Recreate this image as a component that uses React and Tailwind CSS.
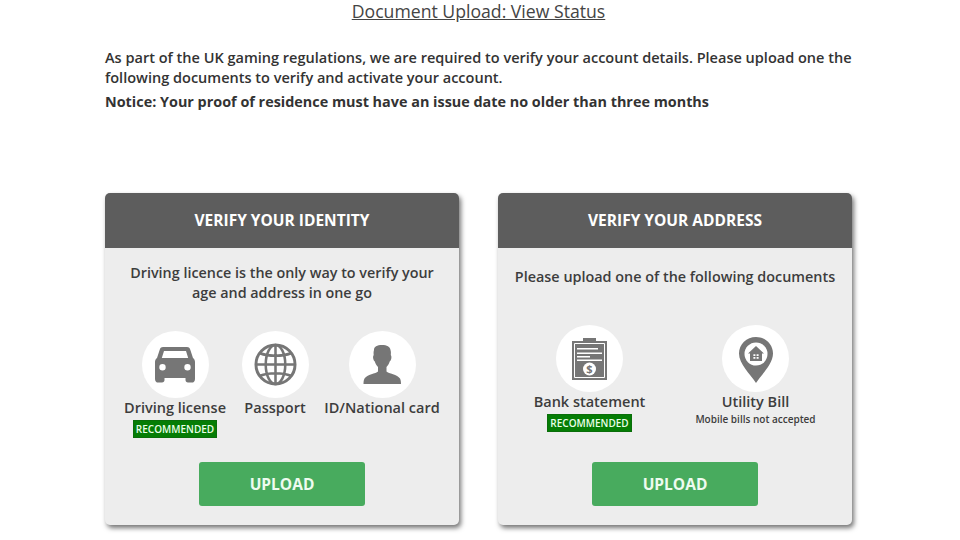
const Recommended = () => (
  <div className="mt-[2px] bg-[#057d05] border border-[#0a6e0a] text-[#e8ffe8] text-[10px] leading-[16px] font-semibold px-[2px] h-[18px] whitespace-nowrap">RECOMMENDED</div>
)

const CarIcon = () => (
  <svg width="40" height="36" viewBox="0 0 40 36" fill="#767676">
    <path fillRule="evenodd" d="M8 0h24c1.500 0 2.600 .8 3.200 2.400L38 11c1.300 1 2 2.500 2 4v17c0 2-1 3-2 3.500h-5c-1.500 0-2.500-1-2.500-2.500v-2h-21v2c0 1.500-1 2.500-2.500 2.500H2c-1-.5-2-1.500-2-3.500V15c0-1.500 .7-3 2-4l2.800-8.600C5.400 .8 6.500 0 8 0zM9 4 6.800 11h26.400L31 4zM7.500 17a3.200 3.200 0 1 0 0 6.400 3.200 3.200 0 0 0 0-6.400zm25 0a3.200 3.200 0 1 0 0 6.400 3.200 3.200 0 0 0 0-6.400z" />
  </svg>
)

const GlobeIcon = () => (
  <svg width="43" height="43" viewBox="0 0 44 44" fill="none" stroke="#767676" strokeWidth="2.600">
    <circle cx="22" cy="22" r="20" strokeWidth="3" />
    <ellipse cx="22" cy="22" rx="10" ry="20" />
    <path d="M22 2v40M2.500 22h39M6 10.500c9 3.500 23 3.500 32 0M6 33.500c9-3.500 23-3.500 32 0" />
  </svg>
)

const PersonIcon = () => (
  <svg width="38" height="40" viewBox="0 0 38 40" fill="#767676">
    <path d="M19 0c5 0 8 1.500 8.500 5 .5 1.500 .5 3 .3 5 .6 .8 .8 2 .5 3.500-.3 1.500-1 2.500-1.600 3-.6 2-1.700 4-3.200 5.500v4.500c2 2 11 3 13.500 7 .8 1.300 1 3.500 1 5.500H.5c0-2 .2-4.200 1-5.500 2.500-4 11.500-5 13.500-7V22c-1.500-1.500-2.600-3.500-3.200-5.500-.6-.5-1.300-1.500-1.600-3-.3-1.500-.1-2.700 .5-3.500-.2-2-.2-3.500 .3-5C11 1.500 14 0 19 0z" />
  </svg>
)

const ClipboardIcon = () => (
  <svg width="35" height="42" viewBox="0 0 35 42">
    <path fill="#767676" d="M0 3h11V0h13v3h11v39H0z" />
    <path fill="none" stroke="#fff" strokeWidth="1" d="M2.500 5.500h30v34h-30z" />
    <path fill="#fff" d="M5 10h21v1.500H5zM5 14.500h25V16H5zM5 18h13v1.500H5zM5 21.500h25V23H5z" />
    <circle cx="17.500" cy="31" r="6.500" fill="#fff" />
    <text x="17.500" y="35" textAnchor="middle" fontSize="11" fontWeight="700" fill="#767676" fontFamily="'Open Sans', sans-serif">$</text>
  </svg>
)

const PinIcon = () => (
  <svg width="34" height="46" viewBox="0 0 34 46" className="mt-[3px]">
    <path fill="#767676" d="M17 0c9.400 0 17 7.400 17 16.500C34 27 23 37 17 46 11 37 0 27 0 16.500 0 7.400 7.600 0 17 0z" />
    <circle cx="17" cy="17" r="11.500" fill="#fff" />
    <path fill="#767676" d="M17 9 25 16.500h-2V24H11v-7.500H9z" />
    <path fill="#fff" d="M14.400 17.200h2v1.800h-2zM17.600 17.200h2v1.800h-2zM14.400 20h2v1.800h-2zM17.600 20h2v1.800h-2z" />
  </svg>
)

const DocOption = ({ icon, label, width, children }) => (
  <div className={`flex flex-col items-center shrink-0 ${width}`}>
    <div className="w-[67px] h-[67px] rounded-full bg-white flex items-center justify-center">{icon}</div>
    <div className="text-[14.500px] leading-[20px] font-semibold text-[#3d3d3d] whitespace-nowrap">{label}</div>
    {children}
  </div>
)

const Card = ({ title, children }) => (
  <div className="w-[354px] h-[332px] rounded-[5px] bg-[#ededed] shadow-[2px_3px_5px_rgba(0,0,0,0.55)] flex flex-col overflow-hidden">
    <div className="h-[55px] shrink-0 bg-[#5d5d5d] flex items-center justify-center text-white text-[15.500px] font-bold">{title}</div>
    <div className="flex-1 flex flex-col">
      {children}
      <button className="mt-auto mb-[19px] mx-auto w-[166px] h-[44px] pt-[2px] rounded-[3px] bg-[#48ab5e] text-[#eefbf0] text-[15.500px] font-bold">UPLOAD</button>
    </div>
  </div>
)

export default function App() {
  return (
    <div className="w-[960px] h-[540px] overflow-hidden bg-white font-['Open_Sans',sans-serif] text-[#333]">
      <div className="w-[750px] ml-[105px]">
        <h1 className="text-center text-[17.650px] leading-[22px] underline text-[#444] pr-[3px]">Document Upload: View Status</h1>
        <p className="mt-[25px] text-[14.520px] leading-[20px] font-semibold">
          As part of the UK gaming regulations, we are required to verify your account details. Please upload one the following documents to verify and activate your account.
        </p>
        <p className="mt-[4px] text-[14.400px] leading-[22px] font-bold">Notice: Your proof of residence must have an issue date no older than three months</p>
        <div className="flex gap-[39px] mt-[80px]">
          <Card title="VERIFY YOUR IDENTITY">
            <p className="mt-[15px] px-[20px] text-center text-[14.350px] leading-[20px] font-semibold text-[#3d3d3d]">
              Driving licence is the only way to verify your age and address in one go
            </p>
            <div className="flex mt-[28px] pl-[20px]">
              <DocOption icon={<CarIcon />} label="Driving license" width="w-[100px]">
                <Recommended />
              </DocOption>
              <DocOption icon={<GlobeIcon />} label="Passport" width="w-[100px]" />
              <DocOption icon={<PersonIcon />} label="ID/National card" width="w-[114px]" />
            </div>
          </Card>
          <Card title="VERIFY YOUR ADDRESS">
            <p className="mt-[19px] text-center text-[14.400px] leading-[20px] font-semibold text-[#3d3d3d]">Please upload one of the following documents</p>
            <div className="flex mt-[38px] pl-[31.500px] gap-[46px]">
              <DocOption icon={<ClipboardIcon />} label="Bank statement" width="w-[120px]">
                <Recommended />
              </DocOption>
              <DocOption icon={<PinIcon />} label="Utility Bill" width="w-[120px]">
                <div className="text-[10px] leading-[14px] font-semibold text-[#3d3d3d] whitespace-nowrap">Mobile bills not accepted</div>
              </DocOption>
            </div>
          </Card>
        </div>
      </div>
    </div>
  )
}
